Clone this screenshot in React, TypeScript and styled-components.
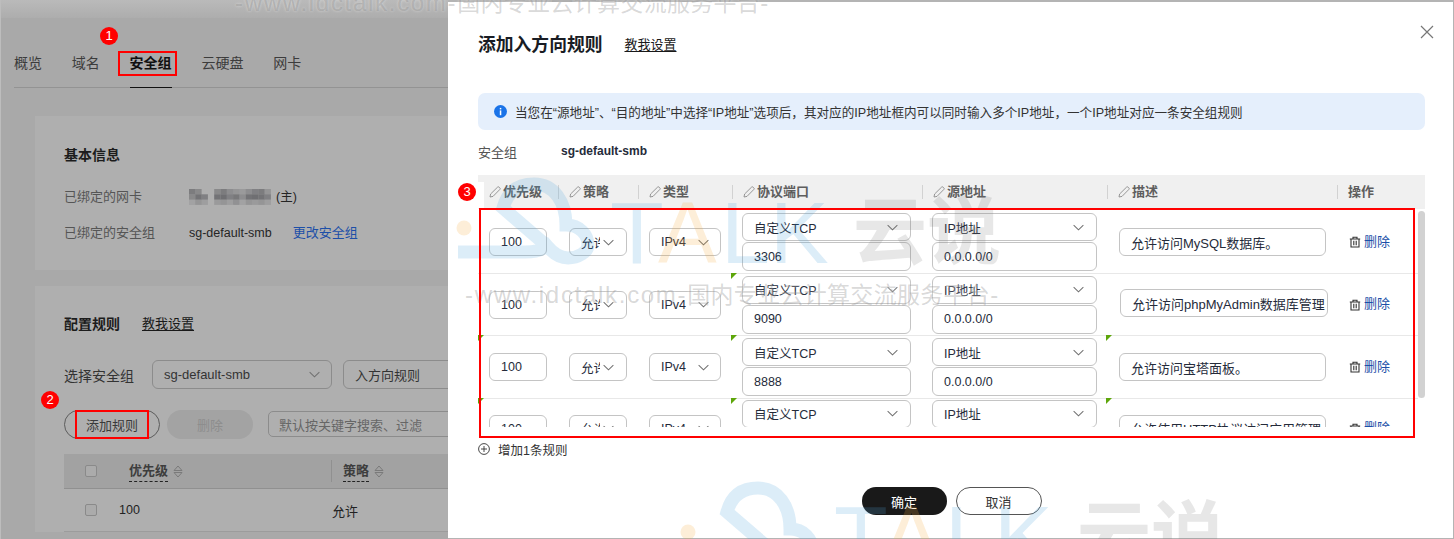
import React from 'react';
import styled, { createGlobalStyle } from 'styled-components';

const Global = createGlobalStyle`
  html, body { margin: 0; padding: 0; background: #fff; }
  * { box-sizing: border-box; }
  body { font-family: "Liberation Sans", "Noto Sans CJK SC", sans-serif; }
`;

const Page = styled.div`
  position: relative; width: 1454px; height: 539px; display: flex; overflow: hidden;
  font-size: 13px; color: #252b3a;
`;
const Left = styled.div`
  width: 448px; height: 539px; flex: none; overflow: hidden; background: #a9a9a9;
  border-left: 1px solid #bdbdbd; display: flex; flex-direction: column;
`;
const TopStrip = styled.div`height: 18px; flex: none; background: linear-gradient(#bababa, #adadad);`;
const Tabs = styled.div`
  height: 70px; flex: none; margin-left: 13px; display: flex; align-items: flex-end; gap: 29.8px;
  border-bottom: 1px solid #939393;
`;
const Tab = styled.div<{ $active?: boolean }>`
  height: 35px; line-height: 20px; padding-bottom: 14px; font-size: 14px; white-space: nowrap;
  color: ${p => (p.$active ? '#111' : '#3c3c3c')}; font-weight: ${p => (p.$active ? 700 : 400)};
  margin-bottom: -1px; border-bottom: 1px solid ${p => (p.$active ? '#111' : 'transparent')};
`;
const Card = styled.div<{ $h?: number; $mt: number; $pt: number }>`
  width: 700px; margin: ${p => p.$mt}px 0 0 34px; background: #afafaf; padding: ${p => p.$pt}px 0 0 29px; flex: none;
  height: ${p => (p.$h ? `${p.$h}px` : 'auto')};
`;
const CardTitle = styled.span`font-size: 14px; font-weight: 700; color: #1c1c1c; line-height: 20px; white-space: nowrap;`;
const InfoRow = styled.div<{ $mt: number }>`
  display: grid; grid-template-columns: 125px auto; margin-top: ${p => p.$mt}px; line-height: 20px; align-items: center;
`;
const Muted = styled.span`color: #555; font-size: 13px;`;
const Value = styled.span`display: flex; align-items: center; gap: 5px; font-size: 12.5px; color: #252525;`;
const LinkText = styled.a`color: #1d4fa8; font-size: 13px; margin-left: 16px;`;
const Teach = styled.a`
  color: #191919; font-size: 13px; text-decoration: underline; text-underline-offset: 2px; line-height: 20px;
`;
const TitleLine = styled.div<{ $gap: number }>`display: flex; align-items: center; gap: ${p => p.$gap}px;`;
const SelectRow = styled.div`display: flex; align-items: center; margin-top: 26px; font-size: 14px; color: #333; white-space: nowrap;`;
const DimSelect = styled.div<{ $w: number; $ml: number }>`
  width: ${p => p.$w}px; height: 29px; margin-left: ${p => p.$ml}px; flex: none; border: 1px solid #8c8c8c; border-radius: 6px;
  padding: 0 11px; display: flex; align-items: center; justify-content: space-between; font-size: 13px; color: #333;
  white-space: nowrap;
`;
const Toolbar = styled.div`display: flex; align-items: center; margin-top: 20px; height: 30px;`;
const OutlineBtn = styled.div`
  width: 96px; height: 29px; flex: none; border: 1px solid #5c5c5c; border-radius: 15px; display: flex;
  align-items: center; justify-content: center; color: #3a3a3a; font-size: 13px; white-space: nowrap;
`;
const DimBtn = styled.div`
  width: 86px; height: 29px; flex: none; margin-left: 7px; border-radius: 15px; background: #a3a3a3; color: #8d8d8d;
  display: flex; align-items: center; justify-content: center; font-size: 13px; white-space: nowrap;
`;
const Search = styled.div`
  width: 300px; height: 26px; margin-left: 15px; flex: none; border: 1px solid #8c8c8c; border-radius: 5px; padding-left: 10px;
  display: flex; align-items: center; color: #666; font-size: 13px; white-space: nowrap;
`;
const DimHead = styled.div`
  margin-top: 15px; height: 35px; width: 400px; background: #a2a2a2; border-bottom: 1px solid #909090;
  display: grid; grid-template-columns: 65px 202px 1fr; align-items: center;
`;
const DimRow = styled.div`
  width: 400px; height: 43px; border-bottom: 1px solid #9c9c9c; display: grid; grid-template-columns: 55px 213px 1fr;
  align-items: center; font-size: 13px; color: #222;
`;
const CheckCell = styled.div`padding-left: 21px; display: flex;`;
const Check = styled.span`width: 12px; height: 12px; border: 1px solid #8a8a8a; border-radius: 2px; background: #ababab; display: block;`;
const SortHead = styled.div<{ $sep?: boolean }>`
  display: flex; align-items: center; gap: 5px; font-weight: 700; color: #3d3d3d; font-size: 13px; line-height: 14px;
  ${p => (p.$sep ? 'border-left: 1px solid #909090; padding-left: 11px;' : '')}
`;
const Dashed = styled.span`border-bottom: 1px dashed #222; padding-bottom: 3px; margin-top: 4px;`;
const RowNum = styled.span`font-size: 12.5px;`;

const Drawer = styled.div`
  flex: 1; height: 539px; position: relative; background: #fff; padding: 33px 28px 0 30px;
  border-top: 2px solid #b4b4b4; border-right: 1px solid #b4b4b4; border-bottom: 1px solid #b4b4b4;
  display: flex; flex-direction: column;
`;
const Close = styled.div`position: absolute; top: 23px; right: 19px; width: 14px; height: 14px; color: #777;`;
const DrawerTitle = styled.h2`margin: 0; font-size: 17.8px; font-weight: 700; color: #191c24; line-height: 20px; white-space: nowrap;`;
const Notice = styled.div`
  margin-top: 38px; height: 37px; flex: none; border-radius: 7px; background: #e5effc; padding-left: 16px;
  display: flex; align-items: center; gap: 8px; font-size: 12.6px; color: #333; white-space: nowrap;
`;
const GroupLine = styled.div`
  margin-top: 11px; height: 20px; flex: none; display: grid; grid-template-columns: 83px auto; align-items: center;
`;
const Bold = styled.span`font-weight: 700; font-size: 12px; color: #252b3a;`;
const HeadRow = styled.div`
  margin-top: 14px; height: 34px; flex: none; background: #f0f0f0; display: grid;
  grid-template-columns: 80px 80px 94px 190px 185px 230px 1fr; align-items: center;
`;
const HeadCell = styled.div<{ $first?: boolean }>`
  height: 14px; line-height: 14px; display: flex; align-items: center; gap: 2px; font-size: 13px; font-weight: 700; color: #5e5e5e;
  padding-left: 10px;
  border-left: 1px solid ${p => (p.$first ? 'transparent' : '#d2d2d2')};
`;
const ScrollArea = styled.div`height: 218px; flex: none; display: flex;`;
const RowList = styled.div`flex: 1; overflow: hidden;`;
const Track = styled.div`width: 7px; flex: none; padding-top: 2px;`;
const Thumb = styled.div`height: 187px; background: #d2d2d2; border-radius: 4px;`;
const Row = styled.div<{ $h: number; $pt?: number }>`
  height: ${p => p.$h}px; flex: none; padding-top: ${p => p.$pt ?? 0}px; border-bottom: 1px solid #e8e8e8;
  display: grid; grid-template-columns: 80px 80px 94px 190px 185px 230px 1fr;
`;
const Cell = styled.div<{ $pad?: number }>`
  position: relative; height: 100%; padding-left: ${p => p.$pad ?? 11}px; display: flex; align-items: center;
`;
const Corner = styled.i<{ $left?: number }>`
  position: absolute; top: -1px; left: ${p => p.$left ?? -1}px; width: 6px; height: 6px; background: #5da60a;
  clip-path: polygon(0 0, 100% 0, 0 100%);
`;
const Field = styled.div<{ $w: number; $h?: number; $shift?: boolean; $size?: number }>`
  width: ${p => p.$w}px; height: ${p => p.$h ?? 28}px; flex: none; border: 1px solid #c4c4c4; border-radius: 6px; background: transparent;
  padding-left: 11px; display: flex; align-items: center; justify-content: space-between; overflow: hidden; white-space: nowrap;
  font-size: ${p => p.$size ?? 12.5}px; color: #252b3a;
  ${p => (p.$shift ? 'margin: 0 0 3px 1px;' : '')}
`;
const Clip = styled.span`display: block; width: 19px; overflow: hidden; flex: none;`;
const Chev = styled.svg<{ $mr: number }>`width: 11px; height: 7px; flex: none; margin-right: ${p => p.$mr}px; color: #707070;`;
const Stack = styled.div<{ $w: number }>`width: ${p => p.$w}px; display: flex; flex-direction: column; gap: 1px;`;
const Del = styled.div`display: flex; align-items: center; gap: 3px; color: #1d4fa8; font-size: 13px;`;
const DelText = styled.span`padding-bottom: 4px;`;
const AddLine = styled.div`
  margin-top: 12px; height: 20px; flex: none; display: flex; align-items: center; gap: 8px; font-size: 12.5px; color: #333;
`;
const Footer = styled.div`margin-top: 28px; flex: none; display: flex; justify-content: center; gap: 9px;`;
const Primary = styled.div`
  width: 85px; height: 28px; border-radius: 14px; background: #191919; color: #fff; font-size: 13px;
  display: flex; align-items: center; justify-content: center;
`;
const Secondary = styled.div`
  width: 86px; height: 28px; border-radius: 14px; border: 1px solid #555; color: #333; font-size: 13px;
  display: flex; align-items: center; justify-content: center;
`;
const WaterText = styled.div<{ $x: number; $y: number }>`
  position: absolute; left: ${p => p.$x}px; top: ${p => p.$y}px; height: 28px; line-height: 28px; display: flex;
  color: rgba(110, 110, 110, 0.27); white-space: nowrap; pointer-events: none;
  text-shadow: 0 0 3px rgba(255, 255, 255, 0.45);
`;
const WaterLatin = styled.span`font-size: 24px; letter-spacing: 1.7px;`;
const WaterHan = styled.span`font-size: 23px; letter-spacing: 0.3px;`;
const WaterLogo = styled.svg<{ $x: number; $y: number }>`
  position: absolute; left: ${p => p.$x}px; top: ${p => p.$y}px; width: 580px; height: 110px; pointer-events: none; overflow: visible;
`;
const RedBox = styled.div<{ $x: number; $y: number; $w: number; $h: number }>`
  position: absolute; left: ${p => p.$x}px; top: ${p => p.$y}px; width: ${p => p.$w}px; height: ${p => p.$h}px;
  border: 2px solid #f00; pointer-events: none;
`;
const Badge = styled.div<{ $x: number; $y: number }>`
  position: absolute; left: ${p => p.$x}px; top: ${p => p.$y}px; width: 18px; height: 18px; border-radius: 50%;
  background: #f00; color: #fff; font-size: 13px; line-height: 18px; text-align: center;
`;
const BadgeCover = styled.div`position: absolute; left: 476px; top: 182px; width: 8px; height: 26px; background: #fff;`;

const Chevron = ({ mr = 9 }: { mr?: number }) => (
  <Chev $mr={mr} viewBox="0 0 12 7" fill="none" stroke="currentColor" strokeWidth="1.1"><path d="M.7.8 6 6l5.3-5.2" /></Chev>
);
const Pencil = () => (
  <svg width="12" height="12" viewBox="0 0 12 12" fill="none" stroke="#8c8c8c" strokeWidth="0.9" style={{ flex: 'none' }}>
    <path d="M1 11 1.6 8 8.6 1.1a1 1 0 0 1 1.4 0l.9.9a1 1 0 0 1 0 1.4L4 10.4 1 11Z" />
  </svg>
);
const Trash = () => (
  <svg width="12" height="12" viewBox="0 0 12 12" fill="none" stroke="#333" strokeWidth="1.1" style={{ flex: 'none' }}>
    <path d="M.8 3h10.4M4 3V1.2h4V3M2 3v8h8V3M4.8 4.8v4.4M7.2 4.8v4.4" />
  </svg>
);
const Sort = () => (
  <svg width="10" height="13" viewBox="0 0 10 13" fill="none" stroke="#7a7a7a" strokeWidth="1" style={{ flex: 'none' }}>
    <path d="M1 5.5 5 1l4 4.5H1ZM1 7.5 5 12l4-4.5H1Z" />
  </svg>
);

const mosaic = [
  [0, 0, 60], [1, 0, 45], [2, 0, 0], [4, 0, 45], [5, 0, 60], [6, 0, 40], [7, 0, 30], [8, 0, 25], [9, 0, 40], [10, 0, 55], [11, 0, 60], [12, 0, 30],
  [0, 1, 45], [1, 1, 70], [2, 1, 55], [4, 1, 70], [5, 1, 75], [6, 1, 55], [7, 1, 65], [8, 1, 40], [9, 1, 70], [10, 1, 75], [11, 1, 70], [12, 1, 55],
  [0, 2, 15], [1, 2, 30], [2, 2, 20], [4, 2, 25], [5, 2, 30], [6, 2, 20], [7, 2, 35], [8, 2, 15], [9, 2, 30], [10, 2, 25], [11, 2, 30], [12, 2, 20],
];
const Mosaic = () => (
  <svg width="82" height="16" viewBox="0 0 82 16" style={{ flex: 'none' }}>
    {mosaic.map(([x, y, o]) => (
      <rect key={`${x}-${y}`} x={x * 6.3} y={y * 5.3} width="6.3" height="5.3" fill="#5a5a5e" opacity={o / 100} />
    ))}
  </svg>
);

const Logo = ({ x, y }: { x: number; y: number }) => (
  <WaterLogo $x={x} $y={y} viewBox="0 0 580 110">
    <circle cx="14" cy="58" r="7.5" fill="rgba(245,170,60,.2)" />
    <g fill="none" stroke="#4fa6dc" strokeWidth="13" opacity="0.2">
      <path d="M8 82H75C84 82 92 80 97 76 102 82 108 88 118 88 128 88 138 82 138 75 138 65 130 55 116 55 116 32 104 14 84 14 70 14 58 20 53 38L97 76" />
    </g>
    <text x="160" y="93" fontSize="88" fontFamily="Liberation Sans, sans-serif" fill="rgba(79,166,220,.2)">T</text>
    <text x="208" y="93" fontSize="88" fontFamily="Liberation Sans, sans-serif" fill="rgba(245,170,60,.2)">A</text>
    <text x="271" y="93" fontSize="88" fontFamily="Liberation Sans, sans-serif" fill="rgba(79,166,220,.2)">LK</text>
    <text x="403" y="88" fontSize="74" fontWeight="700" fontFamily="Noto Sans CJK SC, sans-serif" fill="rgba(120,120,120,.18)">云说</text>
  </WaterLogo>
);

const Slogan = ({ x, y }: { x: number; y: number }) => (
  <WaterText $x={x} $y={y}>
    <WaterLatin>-www.idctalk.com-</WaterLatin>
    <WaterHan>国内专业云计算交流服务平台</WaterHan>
    <WaterLatin>-</WaterLatin>
  </WaterText>
);

type RowData = { h: number; pt?: number; port: string; desc: string; shift?: boolean; c3?: boolean; c4?: boolean; c0?: boolean; descW: number };
const rows: RowData[] = [
  { h: 65, pt: 2, port: '3306', desc: '允许访问MySQL数据库。', descW: 207 },
  { h: 62, port: '9090', desc: '允许访问phpMyAdmin数据库管理', shift: true, c3: true, descW: 208 },
  { h: 63, port: '8888', desc: '允许访问宝塔面板。', c0: true, c3: true, c4: true, descW: 207 },
  { h: 60, port: '', desc: '允许使用HTTP协议访问应用管理', c0: true, c3: true, c4: true, descW: 207 },
];

const heads = ['优先级', '策略', '类型', '协议端口', '源地址', '描述'];

export default function App() {
  return (
    <Page>
      <Global />
      <Left>
        <TopStrip />
        <Tabs>
          <Tab>概览</Tab><Tab>域名</Tab><Tab $active>安全组</Tab><Tab>云硬盘</Tab><Tab>网卡</Tab>
        </Tabs>
        <Card $mt={28} $pt={29} $h={154}>
          <CardTitle>基本信息</CardTitle>
          <InfoRow $mt={22}><Muted>已绑定的网卡</Muted><Value><Mosaic /><span>(主)</span></Value></InfoRow>
          <InfoRow $mt={16}><Muted>已绑定的安全组</Muted><Value>sg-default-smb<LinkText>更改安全组</LinkText></Value></InfoRow>
        </Card>
        <Card $mt={16} $pt={28}>
          <TitleLine $gap={22}><CardTitle>配置规则</CardTitle><Teach>教我设置</Teach></TitleLine>
          <SelectRow>
            选择安全组
            <DimSelect $w={180} $ml={18}>sg-default-smb<Chevron mr={0} /></DimSelect>
            <DimSelect $w={200} $ml={11}>入方向规则</DimSelect>
          </SelectRow>
          <Toolbar>
            <OutlineBtn>添加规则</OutlineBtn>
            <DimBtn>删除</DimBtn>
            <Search>默认按关键字搜索、过滤</Search>
          </Toolbar>
          <DimHead>
            <CheckCell><Check /></CheckCell>
            <SortHead><Dashed>优先级</Dashed><Sort /></SortHead>
            <SortHead $sep><Dashed>策略</Dashed><Sort /></SortHead>
          </DimHead>
          <DimRow><CheckCell><Check /></CheckCell><RowNum>100</RowNum><span>允许</span></DimRow>
        </Card>
      </Left>
      <Drawer>
        <Close>
          <svg width="14" height="14" viewBox="0 0 14 14" fill="none" stroke="currentColor" strokeWidth="1.2"><path d="m1 1 12 12M13 1 1 13" /></svg>
        </Close>
        <TitleLine $gap={22}><DrawerTitle>添加入方向规则</DrawerTitle><Teach>教我设置</Teach></TitleLine>
        <Notice>
          <svg width="13" height="13" viewBox="0 0 13 13" style={{ flex: 'none' }}>
            <circle cx="6.5" cy="6.5" r="6.5" fill="#1a73e8" />
            <rect x="5.8" y="5.4" width="1.5" height="4.8" fill="#fff" />
            <rect x="5.8" y="2.9" width="1.5" height="1.5" fill="#fff" />
          </svg>
          当您在“源地址”、“目的地址”中选择“IP地址”选项后，其对应的IP地址框内可以同时输入多个IP地址，一个IP地址对应一条安全组规则
        </Notice>
        <GroupLine><Muted>安全组</Muted><Bold>sg-default-smb</Bold></GroupLine>
        <HeadRow>
          {heads.map((h, i) => (
            <HeadCell key={h} $first={i === 0}><Pencil />{h}</HeadCell>
          ))}
          <HeadCell>操作</HeadCell>
        </HeadRow>
        <ScrollArea>
          <RowList>
            {rows.map((r, i) => (
              <Row key={i} $h={r.h} $pt={r.pt}>
                <Cell>{r.c0 && <Corner $left={0} />}<Field $w={58}>100</Field></Cell>
                <Cell><Field $w={58}><Clip>允许</Clip><Chevron mr={12} /></Field></Cell>
                <Cell><Field $w={72}>IPv4<Chevron mr={11} /></Field></Cell>
                <Cell $pad={10}>
                  {r.c3 && <Corner />}
                  <Stack $w={169}>
                    <Field $w={169}>自定义TCP<Chevron mr={12} /></Field>
                    <Field $w={169} $h={29}>{r.port}</Field>
                  </Stack>
                </Cell>
                <Cell $pad={10}>
                  <Stack $w={165}>
                    <Field $w={165}>IP地址<Chevron mr={12} /></Field>
                    <Field $w={165} $h={29}>0.0.0.0/0</Field>
                  </Stack>
                </Cell>
                <Cell $pad={12}>
                  {r.c4 && <Corner />}
                  <Field $w={r.descW} $shift={r.shift} $size={13}>{r.desc}</Field>
                </Cell>
                <Cell $pad={12}><Del><Trash /><DelText>删除</DelText></Del></Cell>
              </Row>
            ))}
          </RowList>
          <Track><Thumb /></Track>
        </ScrollArea>
        <AddLine>
          <svg width="12" height="12" viewBox="0 0 12 12" fill="none" stroke="#333" strokeWidth="0.9" style={{ flex: 'none' }}>
            <circle cx="6" cy="6" r="5.4" /><path d="M6 3v6M3 6h6" />
          </svg>
          增加1条规则
        </AddLine>
        <Footer><Primary>确定</Primary><Secondary>取消</Secondary></Footer>
      </Drawer>

      <Logo x={450} y={170} />
      <Logo x={674} y={474} />
      <Slogan x={235} y={-11} />
      <Slogan x={465} y={281} />

      <RedBox $x={118} $y={51} $w={59} $h={25} />
      <RedBox $x={75} $y={410} $w={74} $h={29} />
      <BadgeCover />
      <RedBox $x={479} $y={208} $w={936} $h={230} />
      <Badge $x={100} $y={27}>1</Badge>
      <Badge $x={41} $y={391}>2</Badge>
      <Badge $x={458} $y={183}>3</Badge>
    </Page>
  );
}
